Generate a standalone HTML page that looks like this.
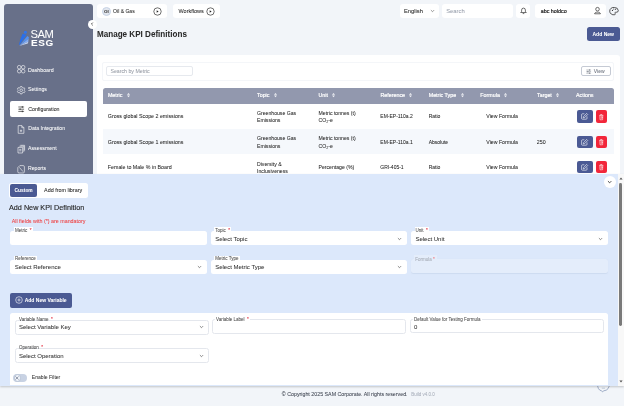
<!DOCTYPE html>
<html><head><meta charset="utf-8">
<style>
*{box-sizing:border-box;margin:0;padding:0}
html,body{width:624px;height:406px;overflow:hidden;background:#f2f5f9;font-family:"Liberation Sans",sans-serif;color:#222}
body{position:relative;will-change:transform}
.a{position:absolute}
.t{position:absolute;white-space:nowrap;line-height:1;-webkit-text-stroke-width:0.04px}
svg{overflow:visible}
</style></head>
<body>
<div class="a" style="left:4.4px;top:4.2px;width:88.20px;height:375.80px;background:#687089;border-radius:3px"></div>
<div class="a" style="left:87.5px;top:19.8px;width:9px;height:9px;border-radius:50%;background:#fff"></div>
<svg class="a" style="left:89px;top:21.3px;" width="6" height="6" viewBox="0 0 6 6"><path d="M3.8 1.6L2.4 3L3.8 4.4" stroke="#444" stroke-width="0.85" fill="none"/></svg>
<svg class="a" style="left:18px;top:30px;" width="12.5" height="17" viewBox="0 0 12.5 17"><circle cx="7.4" cy="2.3" r="1.55" fill="#2f76ee"/><path d="M4.6 3.7 L8.7 4.7 L1.5 14.8 L0.8 15.3 Q2.2 8.6 4.6 3.7Z" fill="#2a6fe9"/><path d="M9.4 6 L10.6 7 Q11.3 7.8 10.6 8.8 L1.6 15.3 Z" fill="#5592f0"/><path d="M10.6 8.8 L10.3 11.8 L1.3 15.7 Z" fill="#86aef2"/><path d="M10.3 11.8 L9.8 13.4 L1.1 16 Z" fill="#c4d4ee"/></svg>
<div class="t" style="left:30.5px;top:29.1px;font-size:11.2px;color:#fff;letter-spacing:-0.45px;font-weight:400">SAM</div>
<div class="t" style="left:30.6px;top:39.1px;font-size:8.5px;color:#fff;font-weight:700;letter-spacing:0.55px;transform:scaleX(1.17);transform-origin:left top">ESG</div>
<svg class="a" style="left:16.8px;top:65.4px;" width="8.4" height="8.4" viewBox="0 0 8.4 8.4"><g fill="none" stroke="#fff" stroke-width="0.6"><circle cx="2.2" cy="2.2" r="1.8"/><circle cx="6.2" cy="2.2" r="1.8"/><circle cx="2.2" cy="6.2" r="1.8"/><circle cx="6.2" cy="6.2" r="1.8"/></g></svg>
<div class="t" style="left:27.9px;top:68.00px;font-size:5.29px;color:#fff;font-weight:400;">Dashboard</div>
<svg class="a" style="left:16.8px;top:85.6px;" width="8.4" height="8.4" viewBox="0 0 8.4 8.4"><g fill="none" stroke="#fff" stroke-width="0.6"><path d="M3.4 0.6H5L5.3 1.6L6.3 2.1L7.2 1.7L8 3.1L7.3 3.8V4.7L8 5.4L7.2 6.8L6.3 6.4L5.3 6.9L5 7.9H3.4L3.1 6.9L2.1 6.4L1.2 6.8L0.4 5.4L1.1 4.7V3.8L0.4 3.1L1.2 1.7L2.1 2.1L3.1 1.6Z" stroke-linejoin="round"/><circle cx="4.2" cy="4.25" r="1.3"/></g></svg>
<div class="t" style="left:27.9px;top:87.00px;font-size:5.29px;color:#fff;font-weight:400;">Settings</div>
<div class="a" style="left:10px;top:101px;width:77.00px;height:16.30px;background:#fff;border-radius:2px"></div>
<svg class="a" style="left:18px;top:106px;" width="6.4" height="6.4" viewBox="0 0 6.4 6.4"><g stroke="#222" stroke-width="0.65"><path d="M0.3 1H6.1M0.3 3.2H6.1M0.3 5.4H6.1"/><path d="M4.3 0.2V1.8M2.1 2.4V4M4.3 4.6V6.2" stroke-width="0.8"/></g></svg>
<div class="t" style="left:28.2px;top:107.00px;font-size:5.28px;color:#222;font-weight:400;">Configuration</div>
<svg class="a" style="left:17.3px;top:124.8px;" width="8" height="9" viewBox="0 0 8 9"><g fill="none" stroke="#fff" stroke-width="0.6"><path d="M1.2 0.6H4.8L6.9 2.7V8.3H1.2Z"/><path d="M4.8 0.6V2.7H6.9"/><path d="M4 4.6V7M2.8 5.8H5.2"/></g></svg>
<div class="t" style="left:28.2px;top:126.00px;font-size:5.19px;color:#fff;font-weight:400;">Data Integration</div>
<svg class="a" style="left:17.3px;top:144.8px;" width="8" height="8.4" viewBox="0 0 8 8.4"><g fill="none" stroke="#fff" stroke-width="0.6"><path d="M1 2.4H5.6V8H1Z"/><path d="M2.4 1.2H6.8V6.8"/><path d="M3.4 0.3H7.6V5.6"/><path d="M2.2 4.4H4.4M2.2 5.8H4.4"/></g></svg>
<div class="t" style="left:27.9px;top:146.00px;font-size:5.29px;color:#fff;font-weight:400;">Assessment</div>
<svg class="a" style="left:17.3px;top:164.5px;" width="8" height="8.4" viewBox="0 0 8 8.4"><g fill="none" stroke="#fff" stroke-width="0.6"><path d="M2.8 0.6H6.2A1.2 1.2 0 0 1 7.4 1.8V6.8A1.2 1.2 0 0 1 6.2 8H2A1.2 1.2 0 0 1 0.8 6.8V2.6Z"/><path d="M2.4 2.4L6 6.6"/></g></svg>
<div class="t" style="left:27.9px;top:166.00px;font-size:5.2px;color:#fff;font-weight:400;">Reports</div>
<div class="a" style="left:97.2px;top:4.1px;width:70.00px;height:14.20px;background:#fff;border-radius:3px"></div>
<div class="a" style="left:101.9px;top:6.7px;width:9px;height:9px;border-radius:50%;background:#e3e7ee;border:0.8px solid #c6d3e6"></div>
<div class="t" style="left:104.1px;top:10.00px;font-size:4.4px;color:#2a2a2a;font-weight:700;">OI</div>
<div class="t" style="left:113.1px;top:9.00px;font-size:5.05px;color:#222;font-weight:400;">Oil &amp; Gas</div>
<svg class="a" style="left:153.1px;top:6.699999999999999px;" width="9" height="9" viewBox="0 0 9 9"><circle cx="4.5" cy="4.5" r="3.7" fill="none" stroke="#222" stroke-width="0.65"/><path d="M3.7 3.3L5.6 4.5L3.7 5.7Z" fill="#222"/></svg>
<div class="a" style="left:172.9px;top:4.1px;width:47.60px;height:14.20px;background:#fff;border-radius:3px"></div>
<div class="t" style="left:178.5px;top:9.00px;font-size:5.5px;color:#222;font-weight:400;">Workflows</div>
<svg class="a" style="left:206.4px;top:6.800000000000001px;" width="9" height="9" viewBox="0 0 9 9"><circle cx="4.5" cy="4.5" r="3.7" fill="none" stroke="#222" stroke-width="0.65"/><path d="M3.7 3.3L5.6 4.5L3.7 5.7Z" fill="#222"/></svg>
<div class="a" style="left:399.5px;top:4.1px;width:39.20px;height:14.20px;background:#fff;border-radius:3px"></div>
<div class="t" style="left:403.9px;top:9.00px;font-size:5.8px;color:#222;font-weight:400;">English</div>
<svg class="a" style="left:429.8px;top:9.4px;" width="5.0" height="4.0" viewBox="0 0 5 4"><path d="M0.9 1.1L2.5 2.7L4.1 1.1" fill="none" stroke="#555" stroke-width="0.6"/></svg>
<div class="a" style="left:442.1px;top:4.1px;width:70.60px;height:14.20px;background:#fff;border-radius:3px"></div>
<div class="t" style="left:446.2px;top:9.00px;font-size:5.85px;color:#989fac;font-weight:400;">Search</div>
<div class="a" style="left:516.4px;top:4.1px;width:14.00px;height:14.20px;background:#fff;border-radius:3px"></div>
<svg class="a" style="left:520.4px;top:7.4px;" width="7" height="7.4" viewBox="0 0 7 7.4"><g fill="none" stroke="#222" stroke-width="0.65"><path d="M0.7 5.5H6.3L5.4 4.4V3.1A1.9 2 0 0 0 1.6 3.1V4.4Z" stroke-linejoin="round"/><path d="M2.7 6.6H4.3"/></g></svg>
<div class="a" style="left:535.2px;top:4.1px;width:70.40px;height:14.20px;background:#fff;border-radius:3px"></div>
<div class="t" style="left:540.7px;top:9.00px;font-size:5.38px;color:#1e1e1e;font-weight:400;-webkit-text-stroke:0.2px #222">abc holdco</div>
<svg class="a" style="left:593.6px;top:7.4px;" width="7" height="7.2" viewBox="0 0 7 7.2"><g fill="none" stroke="#222" stroke-width="0.65"><circle cx="3.5" cy="2.2" r="1.8"/><path d="M0.6 6.8C0.6 4.6 6.4 4.6 6.4 6.8Z"/></g></svg>
<svg class="a" style="left:610px;top:7.1px;" width="8.8" height="8.2" viewBox="0 0 8.8 8.2"><g fill="none" stroke="#222" stroke-width="0.75"><path d="M4.4 0.5A3.9 3.7 0 1 0 4.6 7.7C5.4 7.7 5.5 6.9 5.1 6.4C4.7 5.9 5.1 5.2 5.8 5.2H6.8A1.6 1.6 0 0 0 8.3 3.6A3.9 3.4 0 0 0 4.4 0.5Z"/></g><g fill="#222"><circle cx="2.4" cy="3.4" r="0.55"/><circle cx="3.8" cy="2" r="0.55"/><circle cx="5.6" cy="2.2" r="0.55"/></g></svg>
<div class="t" style="left:97.2px;top:30.00px;font-size:9.3px;color:#2a2a2a;font-weight:700;transform:scaleX(0.87);transform-origin:left top">Manage KPI Definitions</div>
<div class="a" style="left:586.8px;top:26.9px;width:32.80px;height:13.80px;background:#4b5a93;border-radius:2.5px"></div>
<div class="t" style="left:592.5px;top:32.00px;font-size:5.03px;color:#fff;font-weight:700;">Add New</div>
<div class="a" style="left:96.5px;top:55px;width:523.10px;height:325.00px;background:#fff;border-radius:3px"></div>
<div class="a" style="left:102.4px;top:61.6px;width:511.6px;height:19.2px;border:0.5px solid #f4f6f9;border-radius:2px"></div>
<div class="a" style="left:105.6px;top:66.1px;width:87.8px;height:10.2px;border:0.55px solid #e6e9ee;border-radius:2px"></div>
<div class="t" style="left:110.4px;top:69.00px;font-size:5.24px;color:#969ba5;font-weight:400;">Search by Metric</div>
<div class="a" style="left:581.4px;top:66px;width:30px;height:10.4px;border:0.6px solid #c5cad4;border-radius:2px"></div>
<svg class="a" style="left:586.3px;top:68.6px;" width="5.4" height="5.2" viewBox="0 0 5.4 5.2"><g stroke="#6a707c" stroke-width="0.45"><path d="M0.3 1H5.1M0.3 2.6H5.1M0.3 4.2H5.1"/><path d="M3.6 0.3V1.7M1.8 1.9V3.3M3.6 3.5V4.9" stroke-width="0.7"/></g></svg>
<div class="t" style="left:593.8px;top:69.00px;font-size:5.0px;color:#6a707c;font-weight:400;">View</div>
<div class="a" style="left:102.5px;top:87.7px;width:511.50px;height:16.00px;background:#9298ae;border-radius:2.5px 2.5px 0 0"></div>
<div class="t" style="left:107.9px;top:93.00px;font-size:5.35px;color:#fff;font-weight:400;-webkit-text-stroke:0.18px #fff">Metric</div>
<svg class="a" style="left:127.4px;top:93.4px;" width="3" height="4.2" viewBox="0 0 3 4.2"><g fill="#f2f3f7"><path d="M0 1.7L1.5 0L3 1.7Z"/><path d="M0 2.5L1.5 4.2L3 2.5Z"/></g></svg>
<div class="t" style="left:257px;top:93.00px;font-size:5.35px;color:#fff;font-weight:400;-webkit-text-stroke:0.18px #fff">Topic</div>
<svg class="a" style="left:274.0px;top:93.4px;" width="3" height="4.2" viewBox="0 0 3 4.2"><g fill="#f2f3f7"><path d="M0 1.7L1.5 0L3 1.7Z"/><path d="M0 2.5L1.5 4.2L3 2.5Z"/></g></svg>
<div class="t" style="left:318.5px;top:93.00px;font-size:5.35px;color:#fff;font-weight:400;-webkit-text-stroke:0.18px #fff">Unit</div>
<svg class="a" style="left:331.79999999999995px;top:93.4px;" width="3" height="4.2" viewBox="0 0 3 4.2"><g fill="#f2f3f7"><path d="M0 1.7L1.5 0L3 1.7Z"/><path d="M0 2.5L1.5 4.2L3 2.5Z"/></g></svg>
<div class="t" style="left:380.4px;top:93.00px;font-size:5.35px;color:#fff;font-weight:400;-webkit-text-stroke:0.18px #fff">Reference</div>
<svg class="a" style="left:408.59999999999997px;top:93.4px;" width="3" height="4.2" viewBox="0 0 3 4.2"><g fill="#f2f3f7"><path d="M0 1.7L1.5 0L3 1.7Z"/><path d="M0 2.5L1.5 4.2L3 2.5Z"/></g></svg>
<div class="t" style="left:428.7px;top:93.00px;font-size:5.35px;color:#fff;font-weight:400;-webkit-text-stroke:0.18px #fff">Metric Type</div>
<svg class="a" style="left:461.2px;top:93.4px;" width="3" height="4.2" viewBox="0 0 3 4.2"><g fill="#f2f3f7"><path d="M0 1.7L1.5 0L3 1.7Z"/><path d="M0 2.5L1.5 4.2L3 2.5Z"/></g></svg>
<div class="t" style="left:480.3px;top:93.00px;font-size:5.35px;color:#fff;font-weight:400;-webkit-text-stroke:0.18px #fff">Formula</div>
<svg class="a" style="left:504.2px;top:93.4px;" width="3" height="4.2" viewBox="0 0 3 4.2"><g fill="#f2f3f7"><path d="M0 1.7L1.5 0L3 1.7Z"/><path d="M0 2.5L1.5 4.2L3 2.5Z"/></g></svg>
<div class="t" style="left:537px;top:93.00px;font-size:5.35px;color:#fff;font-weight:400;-webkit-text-stroke:0.18px #fff">Target</div>
<svg class="a" style="left:556.4px;top:93.4px;" width="3" height="4.2" viewBox="0 0 3 4.2"><g fill="#f2f3f7"><path d="M0 1.7L1.5 0L3 1.7Z"/><path d="M0 2.5L1.5 4.2L3 2.5Z"/></g></svg>
<div class="t" style="left:576px;top:93.00px;font-size:5.35px;color:#fff;font-weight:400;-webkit-text-stroke:0.18px #fff">Actions</div>
<div class="a" style="left:102.5px;top:129.1px;width:511.50px;height:25.40px;background:#f5f8fc;"></div>
<div class="t" style="left:107.8px;top:114.00px;font-size:5.3px;color:#222;font-weight:400;">Gross global Scope 2 emissions</div>
<div class="t" style="left:257px;top:111.00px;font-size:5.15px;color:#222;font-weight:400;">Greenhouse Gas</div>
<div class="t" style="left:257px;top:118.00px;font-size:5.15px;color:#222;font-weight:400;">Emissions</div>
<div class="t" style="left:318.5px;top:111.00px;font-size:5.15px;color:#222;font-weight:400;">Metric tonnes (t)</div>
<div class="t" style="left:318.5px;top:118.00px;font-size:5.15px;color:#222;font-weight:400;">CO₂-e</div>
<div class="t" style="left:380.3px;top:114.00px;font-size:5.0px;color:#222;font-weight:400;">EM-EP-110a.2</div>
<div class="t" style="left:428.7px;top:114.00px;font-size:5.0px;color:#222;font-weight:400;">Ratio</div>
<div class="t" style="left:486.3px;top:114.00px;font-size:5.2px;color:#222;font-weight:400;">View Formula</div>
<div class="a" style="left:577.3px;top:110.4px;width:15.60px;height:12.50px;background:#4b5a94;border-radius:2px"></div>
<svg class="a" style="left:581.2px;top:113.30000000000001px;" width="7.2" height="6.8" viewBox="0 0 7.2 6.8"><g fill="none" stroke="#fff" stroke-width="0.6"><path d="M3.4 0.8H1.4A0.8 0.8 0 0 0 0.6 1.6V5.4A0.8 0.8 0 0 0 1.4 6.2H5.2A0.8 0.8 0 0 0 6 5.4V3.4"/><path d="M5.6 0.4L6.7 1.5L3.6 4.6L2.3 4.9L2.6 3.6Z"/></g></svg>
<div class="a" style="left:596px;top:110.4px;width:11.20px;height:12.50px;background:#f2263a;border-radius:2px"></div>
<svg class="a" style="left:598.9px;top:113.5px;" width="4.6" height="6.2" viewBox="0 0 4.6 6.2"><g fill="none" stroke="#fff" stroke-width="0.55"><path d="M0.3 1.4H4.3M1.6 1.4V0.5H3V1.4M0.8 1.4L1 5.8H3.6L3.8 1.4"/><path d="M1.7 2.7H2.8A0.6 0.6 0 0 1 2.8 4H1.8M2.2 3.5L1.7 4L2.2 4.5"/></g></svg>
<div class="t" style="left:107.8px;top:140.00px;font-size:5.3px;color:#222;font-weight:400;">Gross global Scope 1 emissions</div>
<div class="t" style="left:257px;top:136.00px;font-size:5.15px;color:#222;font-weight:400;">Greenhouse Gas</div>
<div class="t" style="left:257px;top:144.00px;font-size:5.15px;color:#222;font-weight:400;">Emissions</div>
<div class="t" style="left:318.5px;top:136.00px;font-size:5.15px;color:#222;font-weight:400;">Metric tonnes (t)</div>
<div class="t" style="left:318.5px;top:144.00px;font-size:5.15px;color:#222;font-weight:400;">CO₂-e</div>
<div class="t" style="left:380.3px;top:140.00px;font-size:5.0px;color:#222;font-weight:400;">EM-EP-110a.1</div>
<div class="t" style="left:428.7px;top:140.00px;font-size:5.0px;color:#222;font-weight:400;">Absolute</div>
<div class="t" style="left:486.3px;top:140.00px;font-size:5.2px;color:#222;font-weight:400;">View Formula</div>
<div class="t" style="left:536.8px;top:140.00px;font-size:5.3px;color:#222;font-weight:400;">250</div>
<div class="a" style="left:577.3px;top:135.9px;width:15.60px;height:12.50px;background:#4b5a94;border-radius:2px"></div>
<svg class="a" style="left:581.2px;top:138.8px;" width="7.2" height="6.8" viewBox="0 0 7.2 6.8"><g fill="none" stroke="#fff" stroke-width="0.6"><path d="M3.4 0.8H1.4A0.8 0.8 0 0 0 0.6 1.6V5.4A0.8 0.8 0 0 0 1.4 6.2H5.2A0.8 0.8 0 0 0 6 5.4V3.4"/><path d="M5.6 0.4L6.7 1.5L3.6 4.6L2.3 4.9L2.6 3.6Z"/></g></svg>
<div class="a" style="left:596px;top:135.9px;width:11.20px;height:12.50px;background:#f2263a;border-radius:2px"></div>
<svg class="a" style="left:598.9px;top:139.0px;" width="4.6" height="6.2" viewBox="0 0 4.6 6.2"><g fill="none" stroke="#fff" stroke-width="0.55"><path d="M0.3 1.4H4.3M1.6 1.4V0.5H3V1.4M0.8 1.4L1 5.8H3.6L3.8 1.4"/><path d="M1.7 2.7H2.8A0.6 0.6 0 0 1 2.8 4H1.8M2.2 3.5L1.7 4L2.2 4.5"/></g></svg>
<div class="t" style="left:107.8px;top:165.00px;font-size:5.3px;color:#222;font-weight:400;">Female to Male % in Board</div>
<div class="t" style="left:257px;top:162.00px;font-size:5.15px;color:#222;font-weight:400;">Diversity &amp;</div>
<div class="t" style="left:257px;top:169.00px;font-size:5.15px;color:#222;font-weight:400;">Inclusiveness</div>
<div class="t" style="left:318.5px;top:165.00px;font-size:5.15px;color:#222;font-weight:400;">Percentage (%)</div>
<div class="t" style="left:380.3px;top:165.00px;font-size:5.0px;color:#222;font-weight:400;">GRI-405-1</div>
<div class="t" style="left:428.7px;top:165.00px;font-size:5.0px;color:#222;font-weight:400;">Ratio</div>
<div class="t" style="left:486.3px;top:165.00px;font-size:5.2px;color:#222;font-weight:400;">View Formula</div>
<div class="a" style="left:577.3px;top:160.9px;width:15.60px;height:12.50px;background:#4b5a94;border-radius:2px"></div>
<svg class="a" style="left:581.2px;top:163.8px;" width="7.2" height="6.8" viewBox="0 0 7.2 6.8"><g fill="none" stroke="#fff" stroke-width="0.6"><path d="M3.4 0.8H1.4A0.8 0.8 0 0 0 0.6 1.6V5.4A0.8 0.8 0 0 0 1.4 6.2H5.2A0.8 0.8 0 0 0 6 5.4V3.4"/><path d="M5.6 0.4L6.7 1.5L3.6 4.6L2.3 4.9L2.6 3.6Z"/></g></svg>
<div class="a" style="left:596px;top:160.9px;width:11.20px;height:12.50px;background:#f2263a;border-radius:2px"></div>
<svg class="a" style="left:598.9px;top:164.0px;" width="4.6" height="6.2" viewBox="0 0 4.6 6.2"><g fill="none" stroke="#fff" stroke-width="0.55"><path d="M0.3 1.4H4.3M1.6 1.4V0.5H3V1.4M0.8 1.4L1 5.8H3.6L3.8 1.4"/><path d="M1.7 2.7H2.8A0.6 0.6 0 0 1 2.8 4H1.8M2.2 3.5L1.7 4L2.2 4.5"/></g></svg>
<svg class="a" style="left:596px;top:380px;" width="15" height="13" viewBox="0 0 15 13"><path d="M1.4 3 Q1.4 10.3 5.6 10.8 L6.6 11.9 L7.8 10.8 Q13.4 10.4 13.6 3" fill="none" stroke="#8394b6" stroke-width="0.75"/><path d="M5.8 8.2H9" stroke="#a5b1c8" stroke-width="0.6"/></svg>
<div class="a" style="left:0px;top:173.6px;width:624.00px;height:212.20px;background:#dce8fb;box-shadow:0 1px 2px rgba(0,0,0,0.2)"></div>
<div class="a" style="left:618.4px;top:173.6px;width:5.60px;height:212.20px;background:#f8f8f8;"></div>
<div class="a" style="left:619.3px;top:183px;width:2.90px;height:143.00px;background:#7a7a7a;border-radius:1.4px"></div>
<svg class="a" style="left:619.2px;top:176.8px;" width="4" height="3" viewBox="0 0 4 3"><path d="M0.4 2.6L2 0.6L3.6 2.6Z" fill="#505050"/></svg>
<svg class="a" style="left:619.2px;top:379.8px;" width="4" height="3" viewBox="0 0 4 3"><path d="M0.4 0.4L2 2.4L3.6 0.4Z" fill="#505050"/></svg>
<div class="a" style="left:603.9px;top:175.6px;width:12px;height:12px;border-radius:50%;background:#fff"></div>
<svg class="a" style="left:607.275px;top:179.70000000000002px;" width="5.25" height="4.2" viewBox="0 0 5 4"><path d="M0.9 1.1L2.5 2.7L4.1 1.1" fill="none" stroke="#333" stroke-width="0.85"/></svg>
<div class="a" style="left:9.3px;top:182.6px;width:78.90px;height:15.40px;background:#fff;border-radius:2.5px"></div>
<div class="a" style="left:10.4px;top:184.2px;width:26.50px;height:12.50px;background:#4b5a93;border-radius:2px"></div>
<div class="t" style="left:14.6px;top:189.00px;font-size:4.86px;color:#fff;font-weight:700;">Custom</div>
<div class="t" style="left:44.1px;top:188.00px;font-size:5.4px;color:#222;font-weight:400;">Add from library</div>
<div class="t" style="left:9px;top:204.00px;font-size:7.24px;color:#262626;font-weight:400;-webkit-text-stroke:0.12px #262626">Add New KPI Definition</div>
<div class="t" style="left:11.7px;top:219.00px;font-size:5.33px;color:#f03a3a;font-weight:400;">All fields with (*) are mandatory</div>
<div class="a" style="left:10.4px;top:231.3px;width:197.00px;height:13.80px;background:#fff;border-radius:2.5px;"></div>
<div class="a" style="left:14.0px;top:227.3px;width:18.70px;height:4.80px;background:#fff;"></div>
<div class="t" style="left:14.9px;top:229.00px;font-size:4.5px;color:#4a4a4a;font-weight:400;">Metric &nbsp;<span style="color:#e3283a">*</span></div>
<div class="a" style="left:210.8px;top:231.3px;width:196.40px;height:14.00px;background:#fff;border-radius:2.5px;"></div>
<div class="a" style="left:214.4px;top:227.3px;width:16.96px;height:4.80px;background:#fff;"></div>
<div class="t" style="left:215.3px;top:229.00px;font-size:4.5px;color:#4a4a4a;font-weight:400;">Topic &nbsp;<span style="color:#e3283a">*</span></div>
<div class="t" style="left:215.20000000000002px;top:236.00px;font-size:6.0px;color:#333;font-weight:400;">Select Topic</div>
<svg class="a" style="left:397.09999999999997px;top:236.5px;" width="5.0" height="4.0" viewBox="0 0 5 4"><path d="M0.9 1.1L2.5 2.7L4.1 1.1" fill="none" stroke="#444" stroke-width="0.62"/></svg>
<div class="a" style="left:411px;top:231.3px;width:196.70px;height:14.00px;background:#fff;border-radius:2.5px;"></div>
<div class="a" style="left:414.6px;top:227.3px;width:14.45px;height:4.80px;background:#fff;"></div>
<div class="t" style="left:415.5px;top:229.00px;font-size:4.5px;color:#4a4a4a;font-weight:400;">Unit &nbsp;<span style="color:#e3283a">*</span></div>
<div class="t" style="left:415.4px;top:236.00px;font-size:6.0px;color:#333;font-weight:400;">Select Unit</div>
<svg class="a" style="left:597.6px;top:236.5px;" width="5.0" height="4.0" viewBox="0 0 5 4"><path d="M0.9 1.1L2.5 2.7L4.1 1.1" fill="none" stroke="#444" stroke-width="0.62"/></svg>
<div class="a" style="left:10.4px;top:259.6px;width:197.00px;height:14.90px;background:#fff;border-radius:2.5px;"></div>
<div class="a" style="left:14.0px;top:255.60000000000002px;width:22.96px;height:4.80px;background:#fff;"></div>
<div class="t" style="left:14.9px;top:257.00px;font-size:4.5px;color:#4a4a4a;font-weight:400;">Reference</div>
<div class="t" style="left:14.8px;top:264.00px;font-size:6.0px;color:#333;font-weight:400;">Select Reference</div>
<svg class="a" style="left:197.3px;top:265.25px;" width="5.0" height="4.0" viewBox="0 0 5 4"><path d="M0.9 1.1L2.5 2.7L4.1 1.1" fill="none" stroke="#444" stroke-width="0.62"/></svg>
<div class="a" style="left:210.8px;top:259.6px;width:196.40px;height:14.90px;background:#fff;border-radius:2.5px;"></div>
<div class="a" style="left:214.4px;top:255.60000000000002px;width:25.37px;height:4.80px;background:#fff;"></div>
<div class="t" style="left:215.3px;top:257.00px;font-size:4.5px;color:#4a4a4a;font-weight:400;">Metric Type</div>
<div class="t" style="left:215.20000000000002px;top:264.00px;font-size:6.0px;color:#333;font-weight:400;">Select Metric Type</div>
<svg class="a" style="left:397.09999999999997px;top:265.25px;" width="5.0" height="4.0" viewBox="0 0 5 4"><path d="M0.9 1.1L2.5 2.7L4.1 1.1" fill="none" stroke="#444" stroke-width="0.62"/></svg>
<div class="a" style="left:410.8px;top:258.8px;width:196.90px;height:14.40px;background:#e4edfb;border-radius:2.5px;box-shadow:0 0.5px 0.8px rgba(150,170,200,0.2)"></div>
<div class="a" style="left:414.2px;top:255.2px;width:23.30px;height:4.30px;background:#e4edfb;"></div>
<div class="t" style="left:415.3px;top:258.00px;font-size:4.5px;color:#a4aab4;font-weight:400;">Formula <span style="color:#f07a80">*</span></div>
<div class="a" style="left:10px;top:293.3px;width:62.00px;height:14.30px;background:#4b5a93;border-radius:2px"></div>
<svg class="a" style="left:15.3px;top:296.4px;" width="8" height="8" viewBox="0 0 8 8"><g fill="none" stroke="#fff" stroke-width="0.6"><circle cx="4" cy="4" r="3.3"/><path d="M4 2.4V5.6M2.4 4H5.6"/></g></svg>
<div class="t" style="left:24.7px;top:298.00px;font-size:5.0px;color:#fff;font-weight:700;">Add New Variable</div>
<div class="a" style="left:10px;top:312.8px;width:598.00px;height:72.60px;background:#fff;border-radius:2.5px 2.5px 0 0"></div>
<div class="a" style="left:14.5px;top:319.6px;width:194.30px;height:15.30px;background:#fff;border-radius:2.5px;border:0.55px solid #e4e7ed;"></div>
<div class="a" style="left:18.1px;top:315.6px;width:35.88px;height:4.80px;background:#fff;"></div>
<div class="t" style="left:19.0px;top:318.00px;font-size:4.5px;color:#4a4a4a;font-weight:400;">Variable Name &nbsp;<span style="color:#e3283a">*</span></div>
<div class="t" style="left:18.9px;top:324.00px;font-size:6.0px;color:#333;font-weight:400;">Select Variable Key</div>
<svg class="a" style="left:198.70000000000002px;top:325.45px;" width="5.0" height="4.0" viewBox="0 0 5 4"><path d="M0.9 1.1L2.5 2.7L4.1 1.1" fill="none" stroke="#444" stroke-width="0.62"/></svg>
<div class="a" style="left:211.6px;top:319.3px;width:194.80px;height:14.70px;background:#fff;border-radius:2.5px;border:0.55px solid #e4e7ed;"></div>
<div class="a" style="left:215.2px;top:315.3px;width:34.89px;height:4.80px;background:#fff;"></div>
<div class="t" style="left:216.1px;top:318.00px;font-size:4.5px;color:#4a4a4a;font-weight:400;">Variable Label &nbsp;<span style="color:#e3283a">*</span></div>
<div class="a" style="left:409.6px;top:319.2px;width:194.00px;height:14.20px;background:#fff;border-radius:2.5px;border:0.55px solid #e4e7ed;"></div>
<div class="a" style="left:413.20000000000005px;top:315.2px;width:68.56px;height:4.80px;background:#fff;"></div>
<div class="t" style="left:414.1px;top:318.00px;font-size:4.5px;color:#4a4a4a;font-weight:400;">Default Value for Testing Formula</div>
<div class="t" style="left:414.0px;top:324.00px;font-size:6.0px;color:#333;font-weight:400;">0</div>
<div class="a" style="left:14.5px;top:347.6px;width:194.30px;height:15.80px;background:#fff;border-radius:2.5px;border:0.55px solid #e4e7ed;"></div>
<div class="a" style="left:18.1px;top:343.6px;width:26.21px;height:4.80px;background:#fff;"></div>
<div class="t" style="left:19.0px;top:346.00px;font-size:4.5px;color:#4a4a4a;font-weight:400;">Operation &nbsp;<span style="color:#e3283a">*</span></div>
<div class="t" style="left:18.9px;top:353.00px;font-size:6.0px;color:#333;font-weight:400;">Select Operation</div>
<svg class="a" style="left:198.70000000000002px;top:353.7px;" width="5.0" height="4.0" viewBox="0 0 5 4"><path d="M0.9 1.1L2.5 2.7L4.1 1.1" fill="none" stroke="#444" stroke-width="0.62"/></svg>
<div class="a" style="left:13px;top:373.7px;width:13.90px;height:8.30px;background:#c8d2e3;border-radius:4.2px"></div>
<div class="a" style="left:13.5px;top:374.1px;width:7.5px;height:7.5px;background:#edf1f7;border:0.5px solid #b9c4d6;border-radius:50%"></div>
<svg class="a" style="left:15.25px;top:375.85px;" width="4" height="4" viewBox="0 0 4 4"><path d="M0.5 0.5L3.5 3.5M3.5 0.5L0.5 3.5" stroke="#5f6a80" stroke-width="0.6"/></svg>
<div class="t" style="left:31.8px;top:375.00px;font-size:5.08px;color:#333;font-weight:400;">Enable Filter</div>
<div class="t" style="left:281.8px;top:392.00px;font-size:5.31px;color:#3d4350;font-weight:400;">© Copyright 2025 SAM Corporate. All rights reserved.</div>
<div class="t" style="left:411.3px;top:393.00px;font-size:4.48px;color:#a9afbb;font-weight:400;">Build v4.0.0</div>
</body></html>
